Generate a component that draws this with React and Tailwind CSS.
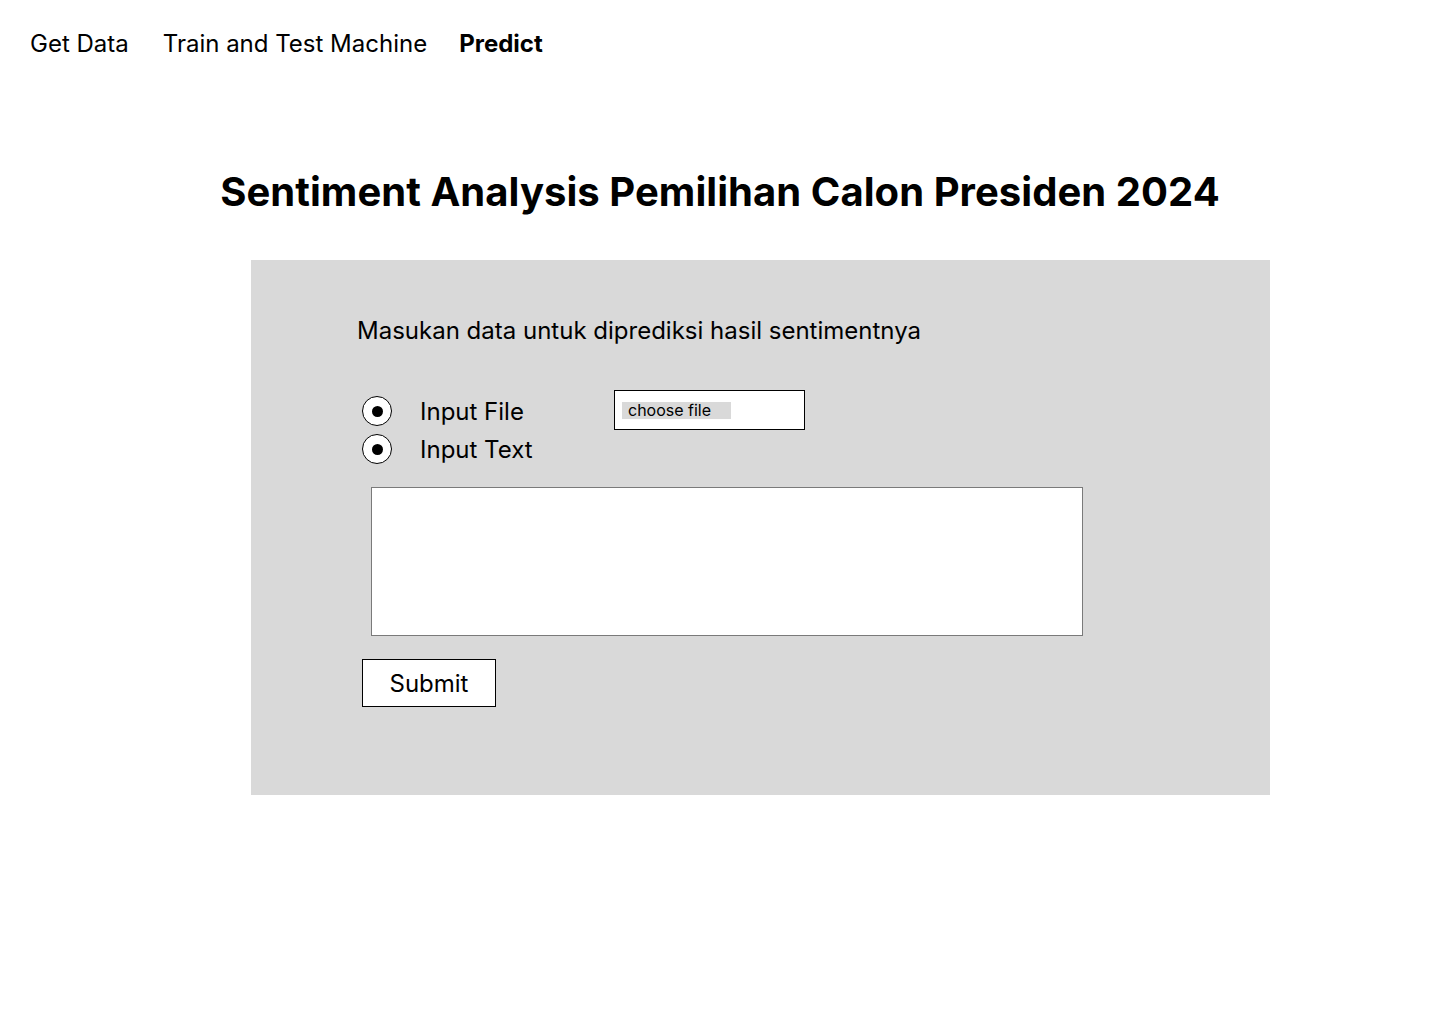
import React, { useState } from 'react';

function Radio({ checked, label, onClick }) {
  return (
    <label className="flex items-center cursor-pointer" onClick={onClick}>
      <span className="w-[30px] h-[30px] rounded-full border border-black bg-white flex items-center justify-center">
        {checked && <span className="w-[11px] h-[11px] rounded-full bg-black"></span>}
      </span>
      <span className="ml-[28px] text-[24px] leading-[29px]">{label}</span>
    </label>
  );
}

export default function App() {
  const [text, setText] = useState("");

  return (
    <div className="min-h-[1024px] bg-white text-black font-['Inter',sans-serif]">
      {/* nav */}
      <nav className="flex items-center pl-[30px] pt-[29px] text-[24px] leading-[29px]">
        <a className="cursor-pointer">Get Data</a>
        <a className="cursor-pointer ml-[34px]">Train and Test Machine</a>
        <a className="cursor-pointer ml-[32px] font-bold">Predict</a>
      </nav>

      <h1 className="mt-[110px] text-center text-[40px] leading-[48px] font-bold tracking-[0.05px]">
        Sentiment Analysis Pemilihan Calon Presiden 2024
      </h1>

      <div className="mt-[44px] ml-[251px] w-[1019px] h-[535px] bg-[#d9d9d9] pt-[56px] pl-[106px]">
        <p className="text-[24px] leading-[29px]">Masukan data untuk diprediksi hasil sentimentnya</p>

        <div className="mt-[45px] ml-[5px] flex items-start">
          <div className="flex flex-col gap-[8px] pt-[6px] w-[252px]">
            <Radio checked label="Input File" />
            <Radio checked label="Input Text" />
          </div>
          <div className="w-[191px] h-[40px] border border-black bg-white flex items-center pl-[7px]">
            <span className="w-[109px] h-[17px] bg-[#d9d9d9] text-[16px] leading-[17px] pl-[6px]">choose file</span>
          </div>
        </div>

        <textarea
          value={text}
          onChange={(e) => setText(e.target.value)}
          className="block mt-[23px] ml-[14px] w-[712px] h-[149px] border border-[#7a7a7a] bg-white resize-none outline-none p-2"
        />

        <button className="mt-[23px] ml-[5px] w-[134px] h-[48px] border border-black bg-white text-[24px] leading-[29px]">
          Submit
        </button>
      </div>
    </div>
  );
}
